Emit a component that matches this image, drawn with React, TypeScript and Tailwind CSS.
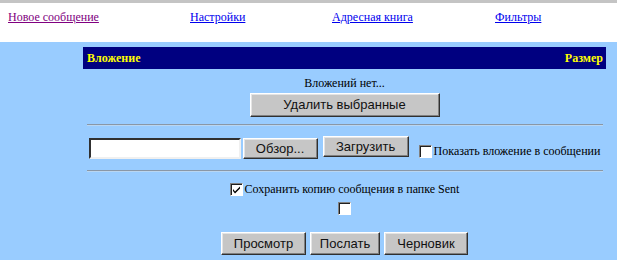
import React from "react"

const serif = "font-['Liberation_Serif','Times_New_Roman',serif]"
const sans = "font-['Liberation_Sans',Arial,sans-serif]"

const btn =
  "flex items-center justify-center bg-[#c6c6c6] text-[13px] text-[#111] border border-t-white border-l-white border-r-[#303030] border-b-[#303030] shadow-[inset_-1px_-1px_0_#808080,inset_1px_1px_0_#e4e4e4] " +
  sans

function Checkbox({ checked = false }: { checked?: boolean }) {
  return (
    <span className="relative block h-[13px] w-[13px] shrink-0 border border-t-[#808080] border-l-[#808080] border-r-white border-b-white bg-white shadow-[inset_1px_1px_0_#202020]">
      {checked ? (
        <svg viewBox="0 0 13 13" className="absolute left-[-1px] top-[-1px] h-[13px] w-[13px]">
          <path d="M3 6 L5 8.5 L10 3.5 L10 5.5 L5 10.5 L3 8 Z" fill="#000" />
        </svg>
      ) : null}
    </span>
  )
}

function Divider() {
  return <div className="h-[2px] w-[516px] border-t border-[#8a97a6] border-b border-b-[#b9d6f2]" />
}

export default function App() {
  return (
    <div className={`h-[260px] w-[617px] overflow-hidden bg-white ${serif}`}>
      <div className="h-[42px] border-t-[3px] border-[#c4c4c4] bg-white">
        <div className="flex pt-[7px] text-[12px] leading-[14px]">
          <a href="#" className="ml-[8px] w-[182px] text-[#800080] underline">
            Новое сообщение
          </a>
          <a href="#" className="w-[142px] text-[#0000ee] underline">
            Настройки
          </a>
          <a href="#" className="w-[163px] text-[#0000ee] underline">
            Адресная книга
          </a>
          <a href="#" className="text-[#0000ee] underline">
            Фильтры
          </a>
        </div>
      </div>

      <div className="h-[218px] bg-[#99ccff] pl-[83px] pt-[5px]">
        <div className="flex w-[523px] flex-col items-center">
          <div className="flex h-[22px] w-full items-center justify-between bg-[#000080] pl-[4px] pr-[3px] text-[12px] font-bold text-[#ffff00]">
            <span>Вложение</span>
            <span>Размер</span>
          </div>

          <p className="mt-[7px] text-[12px] leading-[14px] text-black">Вложений нет...</p>
          <button type="button" className={`${btn} mt-[3px] h-[24px] w-[190px]`}>
            Удалить выбранные
          </button>

          <div className="mt-[7px]">
            <Divider />
          </div>

          <div className="mt-[10px] flex h-[23px] items-start">
            <input
              type="text"
              className="mt-[2px] h-[21px] w-[152px] border-2 border-t-[#303030] border-l-[#303030] border-r-[#f0f0f0] border-b-[#f0f0f0] bg-white outline-none"
            />
            <button type="button" className={`${btn} ml-[2px] mt-[2px] h-[21px] w-[75px]`}>
              Обзор...
            </button>
            <button type="button" className={`${btn} ml-[5px] h-[21px] w-[86px]`}>
              Загрузить
            </button>
            <span className="ml-[10px] mt-[9px]">
              <Checkbox />
            </span>
            <span className="ml-[2px] mt-[8px] text-[12px] leading-[14px] text-black">Показать вложение в сообщении</span>
          </div>

          <div className="mt-[11px]">
            <Divider />
          </div>

          <label className="mt-[11px] flex items-center gap-[2px] text-[12px] leading-[13px] text-black">
            <Checkbox checked />
            <span>Сохранить копию сообщения в папке Sent</span>
          </label>
          <div className="mt-[6px]">
            <Checkbox />
          </div>

          <div className="mt-[17px] flex gap-[4px]">
            <button type="button" className={`${btn} h-[23px] w-[85px]`}>
              Просмотр
            </button>
            <button type="button" className={`${btn} h-[23px] w-[70px]`}>
              Послать
            </button>
            <button type="button" className={`${btn} h-[23px] w-[84px]`}>
              Черновик
            </button>
          </div>
        </div>
      </div>
    </div>
  )
}
